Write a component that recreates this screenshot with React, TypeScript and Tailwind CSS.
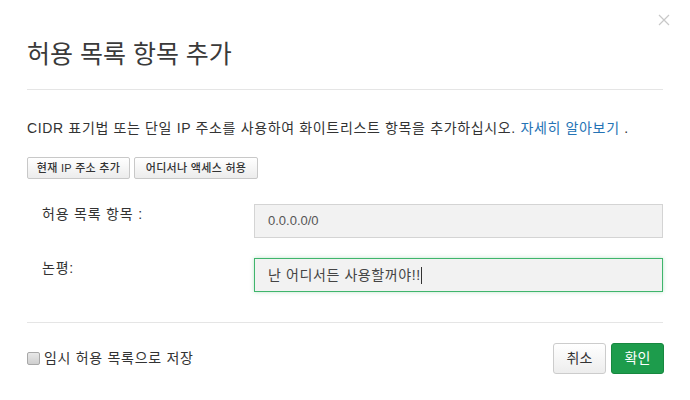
import React from 'react';

const font = { fontFamily: '"Liberation Sans", "Noto Sans CJK KR", sans-serif' };

const App = () => {
  return (
    <div className="relative w-[690px] h-[400px] bg-white px-[27px] text-[#333]" style={font}>
      <button className="absolute right-[20px] top-[14px] w-[12px] h-[12px] text-[#c8c8c8]">
        <svg viewBox="0 0 12 12" width="12" height="12" stroke="currentColor" strokeWidth="1.2">
          <path d="M1 1 L11 11 M11 1 L1 11" />
        </svg>
      </button>

      <div className="pt-[36px] pb-[17px] border-b border-[#e5e5e5]">
        <h1 className="text-[25px] leading-[36px] text-[#3a3a3a] font-normal">허용 목록 항목 추가</h1>
      </div>

      <p className="mt-[28px] text-[14px] leading-[20px] tracking-[0.65px] text-[#333]">
        CIDR 표기법 또는 단일 IP 주소를 사용하여 화이트리스트 항목을 추가하십시오.{' '}
        <a className="text-[#2473b5]">자세히 알아보기</a> .
      </p>

      <div className="mt-[19px] flex gap-[4px]">
        <button className="h-[22px] w-[103px] text-[11px] font-medium tracking-[0.3px] text-[#333] border border-[#c8c8c8] rounded-[2px] bg-gradient-to-b from-white to-[#ececec]">
          현재 IP 주소 추가
        </button>
        <button className="h-[22px] w-[124px] text-[11px] font-medium tracking-[0.3px] text-[#333] border border-[#c8c8c8] rounded-[2px] bg-gradient-to-b from-white to-[#ececec]">
          어디서나 액세스 허용
        </button>
      </div>

      <div className="mt-[25px] flex flex-col gap-[20px]">
        <div className="flex">
          <div className="w-[227px] pl-[15px] text-[14px] leading-[20px] tracking-[0.8px]">허용 목록 항목 :</div>
          <div className="flex-1 h-[34px] flex items-center px-[13px] bg-[#f2f2f2] border border-[#d4d4d4] text-[13px] text-[#555]">
            0.0.0.0/0
          </div>
        </div>
        <div className="flex">
          <div className="w-[227px] pl-[15px] text-[14px] leading-[20px] tracking-[0.8px]">논평:</div>
          <div className="flex-1 h-[34px] flex items-center px-[13px] bg-[#f2f2f2] border border-[#3fb56c] shadow-[0_0_4px_rgba(60,180,100,0.35)] text-[14px] tracking-[0.6px] text-[#444]">
            난 어디서든 사용할꺼야!!
            <span className="inline-block w-px h-[17px] bg-[#333]" />
          </div>
        </div>
      </div>

      <div className="mt-[30px] border-t border-[#e5e5e5] pt-[20px] flex items-center justify-between">
        <label className="flex items-center gap-[4px] text-[14px] tracking-[0.7px] text-[#333]">
          <span className="w-[13px] h-[13px] rounded-[2px] border border-[#a8a8a8] bg-gradient-to-b from-[#e8e8e8] to-[#cfcfcf]" />
          임시 허용 목록으로 저장
        </label>
        <div className="flex gap-[5px] -mr-[1px]">
          <button className="h-[31px] w-[53px] text-[14px] text-[#333] border border-[#ccc] rounded-[3px] bg-gradient-to-b from-white to-[#ededed]">
            취소
          </button>
          <button className="h-[31px] w-[53px] text-[14px] text-white border border-[#17883f] rounded-[3px] bg-[#1d9c4c]">
            확인
          </button>
        </div>
      </div>
    </div>
  );
};

export default App;
